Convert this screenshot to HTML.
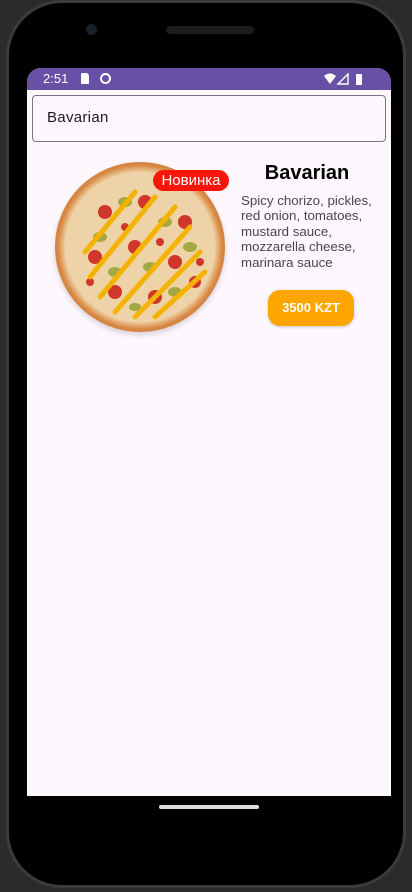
<!DOCTYPE html>
<html><head><meta charset="utf-8"><style>
*{margin:0;padding:0;box-sizing:border-box}
body{width:412px;height:892px;background:#2a2b2d;overflow:hidden;position:relative;font-family:"Liberation Sans",sans-serif}
.phone{position:absolute;left:6px;top:0;width:400px;height:888px;background:#000;border-radius:56px;border:3px solid #3a3b3e}
.screen{position:absolute;left:27px;top:68px;width:364px;height:728px;background:#fef7fe;border-radius:14px 14px 0 0;overflow:hidden}
.sb{height:22px;background:#6750a5;color:#fff;font-size:13px;position:relative}
.sb .t{position:absolute;left:16px;top:3px}
.search{position:absolute;left:5px;top:27px;width:354px;height:47px;border:1px solid #79747e;border-radius:4px;font-size:15px;color:#1c1b1f;padding:13px 0 0 14px;letter-spacing:.3px}
.pizza{position:absolute;left:28px;top:94px;width:170px;height:170px;border-radius:50%;background:radial-gradient(circle,#efd3a8 0 62%,#d98a45 68%,#c87634 74%,#dfa060 100%);box-shadow:0 3px 6px rgba(0,0,0,.15)}
.badge{position:absolute;left:126px;top:102px;width:76px;height:21px;background:#f8150a;color:#fff;border-radius:11px;font-size:15px;text-align:center;line-height:21px}
.title{position:absolute;left:212px;top:94px;width:136px;text-align:center;font-weight:bold;font-size:20px;color:#000}
.desc{position:absolute;left:214px;top:125px;width:145px;font-size:13.3px;line-height:15.4px;color:#49454f}
.btn{position:absolute;left:241px;top:222px;width:86px;height:36px;background:#fea500;color:#fff;border-radius:12px;font-weight:bold;font-size:13px;text-align:center;line-height:36px;box-shadow:0 1px 3px rgba(0,0,0,.2)}
.pill{position:absolute;left:159px;top:805px;width:100px;height:4px;background:#ddd;border-radius:2px}
</style></head><body>
<div class="phone"></div>
<div style="position:absolute;left:86px;top:24px;width:11px;height:11px;border-radius:50%;background:#1a1d2a"></div>
<div style="position:absolute;left:166px;top:26px;width:88px;height:8px;border-radius:4px;background:#1c1c1c"></div>
<div class="screen">
<div class="sb"><span class="t">2:51</span>
<div style="position:absolute;left:54px;top:5px;width:8px;height:11px;background:#fff;border-radius:1px 3px 1px 1px"></div>
<div style="position:absolute;left:73px;top:5px;width:11px;height:11px;border:2px solid #fff;border-radius:50%"></div>
<svg style="position:absolute;left:297px;top:5px" width="40" height="12" viewBox="0 0 40 12"><path d="M0 3 Q6 -2 12 3 L6 11Z" fill="#fff"/><path d="M14 11 L24 1 V11Z" fill="none" stroke="#fff" stroke-width="1.4"/><rect x="32" y="1" width="6" height="11" fill="#fff"/></svg>
</div>
<div class="search">Bavarian</div>
<div class="pizza">
<svg width="170" height="170" viewBox="0 0 170 170"><g fill="#9aa53a" opacity=".9"><ellipse cx="70" cy="40" rx="7" ry="5"/><ellipse cx="110" cy="60" rx="7" ry="5"/><ellipse cx="45" cy="75" rx="7" ry="5"/><ellipse cx="95" cy="105" rx="7" ry="5"/><ellipse cx="135" cy="85" rx="7" ry="5"/><ellipse cx="60" cy="110" rx="7" ry="5"/><ellipse cx="120" cy="130" rx="7" ry="5"/><ellipse cx="80" cy="145" rx="6" ry="4"/></g><g fill="#d0372a"><circle cx="50" cy="50" r="7"/><circle cx="90" cy="40" r="7"/><circle cx="130" cy="60" r="7"/><circle cx="40" cy="95" r="7"/><circle cx="80" cy="85" r="7"/><circle cx="120" cy="100" r="7"/><circle cx="60" cy="130" r="7"/><circle cx="100" cy="135" r="7"/><circle cx="140" cy="120" r="6"/><circle cx="70" cy="65" r="4"/><circle cx="105" cy="80" r="4"/><circle cx="35" cy="120" r="4"/><circle cx="145" cy="100" r="4"/></g><g fill="none" stroke="#f4b300" stroke-width="5" stroke-linecap="round"><path d="M30 90 L80 30"/><path d="M35 115 L100 35"/><path d="M45 135 L120 45"/><path d="M60 150 L135 65"/><path d="M80 155 L145 90"/><path d="M100 155 L150 110"/></g></svg>
</div>
<div class="badge">Новинка</div>
<div class="title">Bavarian</div>
<div class="desc">Spicy chorizo, pickles, red onion, tomatoes, mustard sauce, mozzarella cheese, marinara sauce</div>
<div class="btn">3500 KZT</div>
</div>
<div class="pill"></div>
</body></html>
